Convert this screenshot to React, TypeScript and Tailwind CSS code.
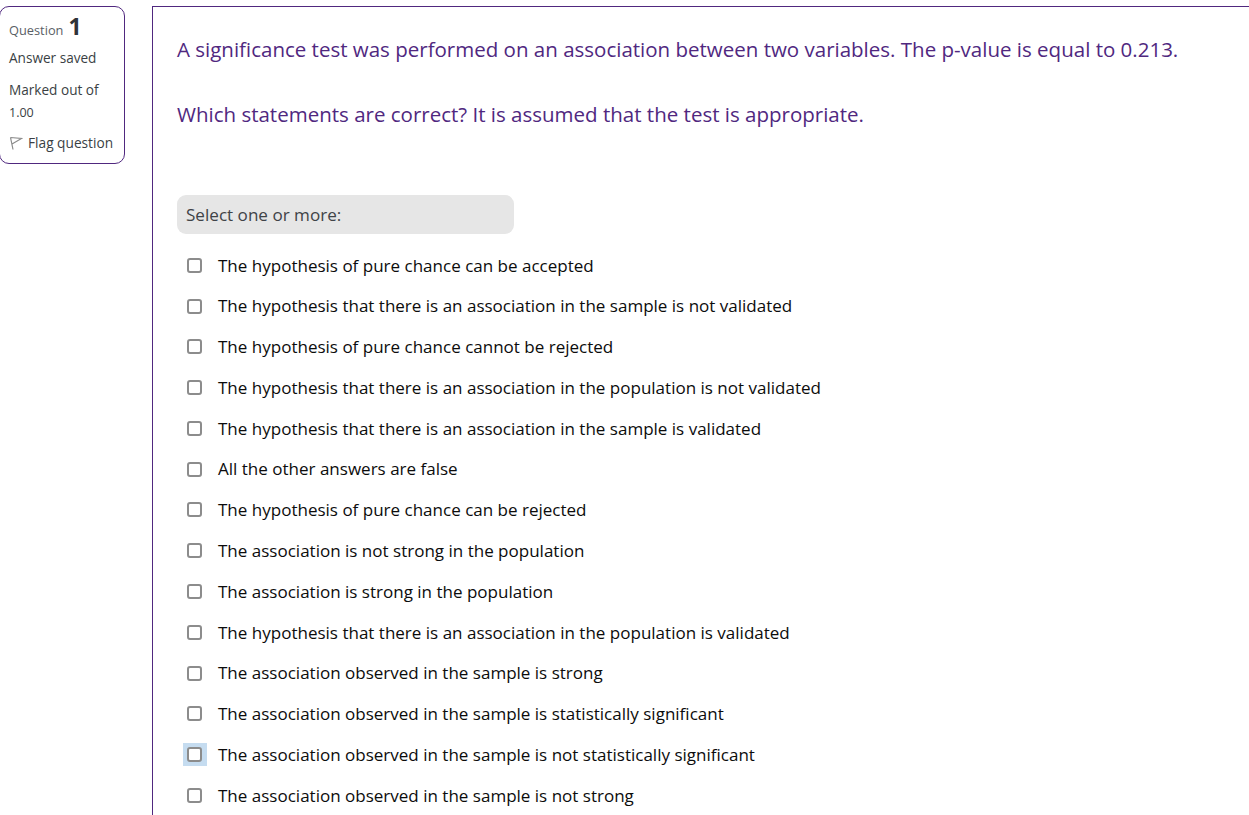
const options = [
  "The hypothesis of pure chance can be accepted",
  "The hypothesis that there is an association in the sample is not validated",
  "The hypothesis of pure chance cannot be rejected",
  "The hypothesis that there is an association in the population is not validated",
  "The hypothesis that there is an association in the sample is validated",
  "All the other answers are false",
  "The hypothesis of pure chance can be rejected",
  "The association is not strong in the population",
  "The association is strong in the population",
  "The hypothesis that there is an association in the population is validated",
  "The association observed in the sample is strong",
  "The association observed in the sample is statistically significant",
  "The association observed in the sample is not statistically significant",
  "The association observed in the sample is not strong",
];

export default function App() {
  return (
    <div className="h-[815px] w-[1249px] overflow-hidden bg-white flex items-start font-['Open_Sans','Noto_Sans',sans-serif]">
      <aside className="ml-[-1px] mt-[6px] w-[126px] h-[158px] shrink-0 rounded-[10px] border border-[#50287f] pl-[9px] pt-[6px] text-[#3a3f44]">
        <div className="flex items-baseline h-[26px]">
          <span className="text-[12.8px] text-[#5a6066]">Question</span>
          <span className="ml-[5px] text-[23px] font-bold leading-[26px] text-[#2f3338]">1</span>
        </div>
        <div className="mt-[9px] text-[13.6px] leading-[20px]">Answer saved</div>
        <div className="mt-[11px] text-[13.6px] leading-[22px]">Marked out of<br /><span className="text-[12.5px]">1.00</span></div>
        <div className="mt-[9px] flex items-center text-[13.7px] leading-[20px]">
          <svg width="14" height="14" viewBox="0 0 14 14" fill="none" stroke="#8a8a8a" strokeWidth="1.2" className="mr-[5px]">
            <path d="M1.5 1.5 L4 13.5 M1.5 1.5 L12.5 2.5 L3 8" />
          </svg>
          Flag question
        </div>
      </aside>
      <main className="ml-[27px] mt-[6px] w-[1200px] shrink-0 border-l border-t border-[#50287f] h-[900px] pl-[24px]">
        <p className="mt-[28px] text-[20.5px] leading-[29px] text-[#50287f] whitespace-nowrap">A significance test was performed on an association between two variables. The p-value is equal to 0.213.</p>
        <p className="mt-[36px] text-[20.5px] leading-[29px] text-[#50287f] whitespace-nowrap">Which statements are correct? It is assumed that the test is appropriate.</p>
        <div className="mt-[66px] w-[337px] h-[39px] rounded-[9px] bg-[#e6e6e6] pl-[9px] flex items-center text-[17.1px] text-[#3f4347]">Select one or more:</div>
        <ul className="mt-[11px]">
          {options.map((t, i) => (
            <li key={t} className="h-[40.77px] flex items-center text-[17.03px] text-[#0c0c0c] whitespace-nowrap">
              <span className="w-[41px] shrink-0 flex justify-start pl-[6px]">
                {i === 12 ? (
                  <span className="w-[24px] h-[23px] bg-[#c5dcf0] flex items-center pl-[4px]">
                    <span className="w-[15px] h-[15px] rounded-[3px] border-2 border-[#8c8c8c] bg-white"></span>
                  </span>
                ) : (
                  <span className="ml-[4px] w-[15px] h-[15px] rounded-[3px] border-2 border-[#8c8c8c] bg-white"></span>
                )}
              </span>
              {t}
            </li>
          ))}
        </ul>
      </main>
    </div>
  );
}
